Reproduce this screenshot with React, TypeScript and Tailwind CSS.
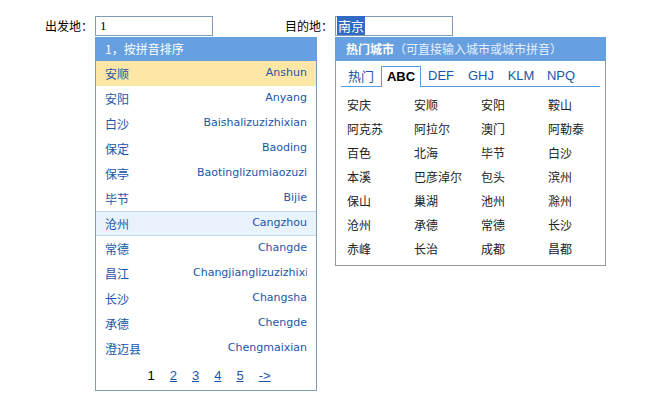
import React from "react";

const rows: { zh: string; py: string; state?: "sel" | "hover" }[] = [
  { zh: "安顺", py: "Anshun", state: "sel" },
  { zh: "安阳", py: "Anyang" },
  { zh: "白沙", py: "Baishalizuzizhixian" },
  { zh: "保定", py: "Baoding" },
  { zh: "保亭", py: "Baotinglizumiaozuzi" },
  { zh: "毕节", py: "Bijie" },
  { zh: "沧州", py: "Cangzhou", state: "hover" },
  { zh: "常德", py: "Changde" },
  { zh: "昌江", py: "Changjianglizuzizhixian" },
  { zh: "长沙", py: "Changsha" },
  { zh: "承德", py: "Chengde" },
  { zh: "澄迈县", py: "Chengmaixian" },
];

const hot = [
  "安庆", "安顺", "安阳", "鞍山",
  "阿克苏", "阿拉尔", "澳门", "阿勒泰",
  "百色", "北海", "毕节", "白沙",
  "本溪", "巴彦淖尔", "包头", "滨州",
  "保山", "巢湖", "池州", "滁州",
  "沧州", "承德", "常德", "长沙",
  "赤峰", "长治", "成都", "昌都",
];

const tabs = ["热门", "ABC", "DEF", "GHJ", "KLM", "NPQ"];

const cjk = "font-['Noto_Sans_CJK_SC','Noto_Sans',sans-serif]";

export default function App() {
  return (
    <div className={`w-[650px] h-[400px] bg-white ${cjk} text-[12px] text-black`}>
      <div className="flex items-start pt-[16px] pl-[45px]">
        <div className="h-[20px] w-[48px] leading-[20px] mr-[2px]">出发地：</div>
        <div className="relative">
          <div className="w-[118px] h-[20px] border border-[#7f9db9] pl-[4px] leading-[18px] text-[13px] font-['Liberation_Serif',serif]">
            1
          </div>
          <div className="absolute left-0 top-[21px] w-[222px] bg-white border border-t-0 border-[#7f9db9] z-10">
            <div className="h-[24px] bg-[#67a0e0] text-white leading-[24px] -mx-[1px] px-[10px]">
              1，按拼音排序
            </div>
            {rows.map((r) => (
              <div
                key={r.zh}
                className={
                  "flex items-center justify-between h-[25px] pl-[9px] pr-[9px] text-[#1a56a8] " +
                  (r.state === "sel"
                    ? "bg-[#fee6a6]"
                    : r.state === "hover"
                    ? "bg-[#e8f3fd] border-y border-[#c2d8ee]"
                    : "")
                }
              >
                <span>{r.zh}</span>
                <span className="w-[114px] text-right overflow-hidden whitespace-nowrap text-[11px] font-['DejaVu_Sans',sans-serif]">
                  {r.py}
                </span>
              </div>
            ))}
            <div className="h-[29px] flex items-center justify-center gap-[15px] pl-[6px] text-[13px] font-['Liberation_Sans',sans-serif]">
              <span className="text-black">1</span>
              {["2", "3", "4", "5", "->"].map((p) => (
                <span key={p} className="text-[#1a56a8] underline">
                  {p}
                </span>
              ))}
            </div>
          </div>
        </div>
        <div className="h-[20px] w-[48px] leading-[20px] ml-[72px] mr-[2px]">目的地：</div>
        <div className="relative">
          <div className="w-[118px] h-[20px] border border-[#7f9db9] pl-[1px] leading-[18px] text-[13px]">
            <span className="bg-[#316ac5] text-white px-[1px]">南京</span>
          </div>
          <div className="absolute left-0 top-[21px] w-[271px] bg-white border border-t-0 border-[#999999] z-10">
            <div className="h-[24px] bg-[#67a0e0] -mx-[1px] pl-[11px] leading-[24px] text-white">
              <span className="font-bold">热门城市</span>
              <span className="text-[#e6efff]">（可直接输入城市或城市拼音）</span>
            </div>
            <div className="mx-[5px] mt-[5px] flex border-b border-[#5b9be0] h-[21px]">
              {tabs.map((t) =>
                t === "ABC" ? (
                  <div
                    key={t}
                    className="w-[40px] h-[21px] -mb-[1px] bg-white border border-b-0 border-[#5b9be0] flex items-center justify-center font-bold font-['Liberation_Sans',sans-serif] text-[13px] text-black"
                  >
                    {t}
                  </div>
                ) : (
                  <div
                    key={t}
                    className={
                      "w-[40px] h-[20px] flex items-center justify-center text-[#1a56a8] text-[13px] " +
                      (t === "热门" ? "text-[12px]" : "font-['Liberation_Sans',sans-serif]")
                    }
                  >
                    {t}
                  </div>
                )
              )}
            </div>
            <div className="grid grid-cols-[67px_67px_67px_67px] pl-[11px] pt-[6px] pb-[4px]">
              {hot.map((c, i) => (
                <div key={i} className="h-[24px] leading-[24px] text-[#222222] whitespace-nowrap">
                  {c}
                </div>
              ))}
            </div>
          </div>
        </div>
      </div>
    </div>
  );
}
